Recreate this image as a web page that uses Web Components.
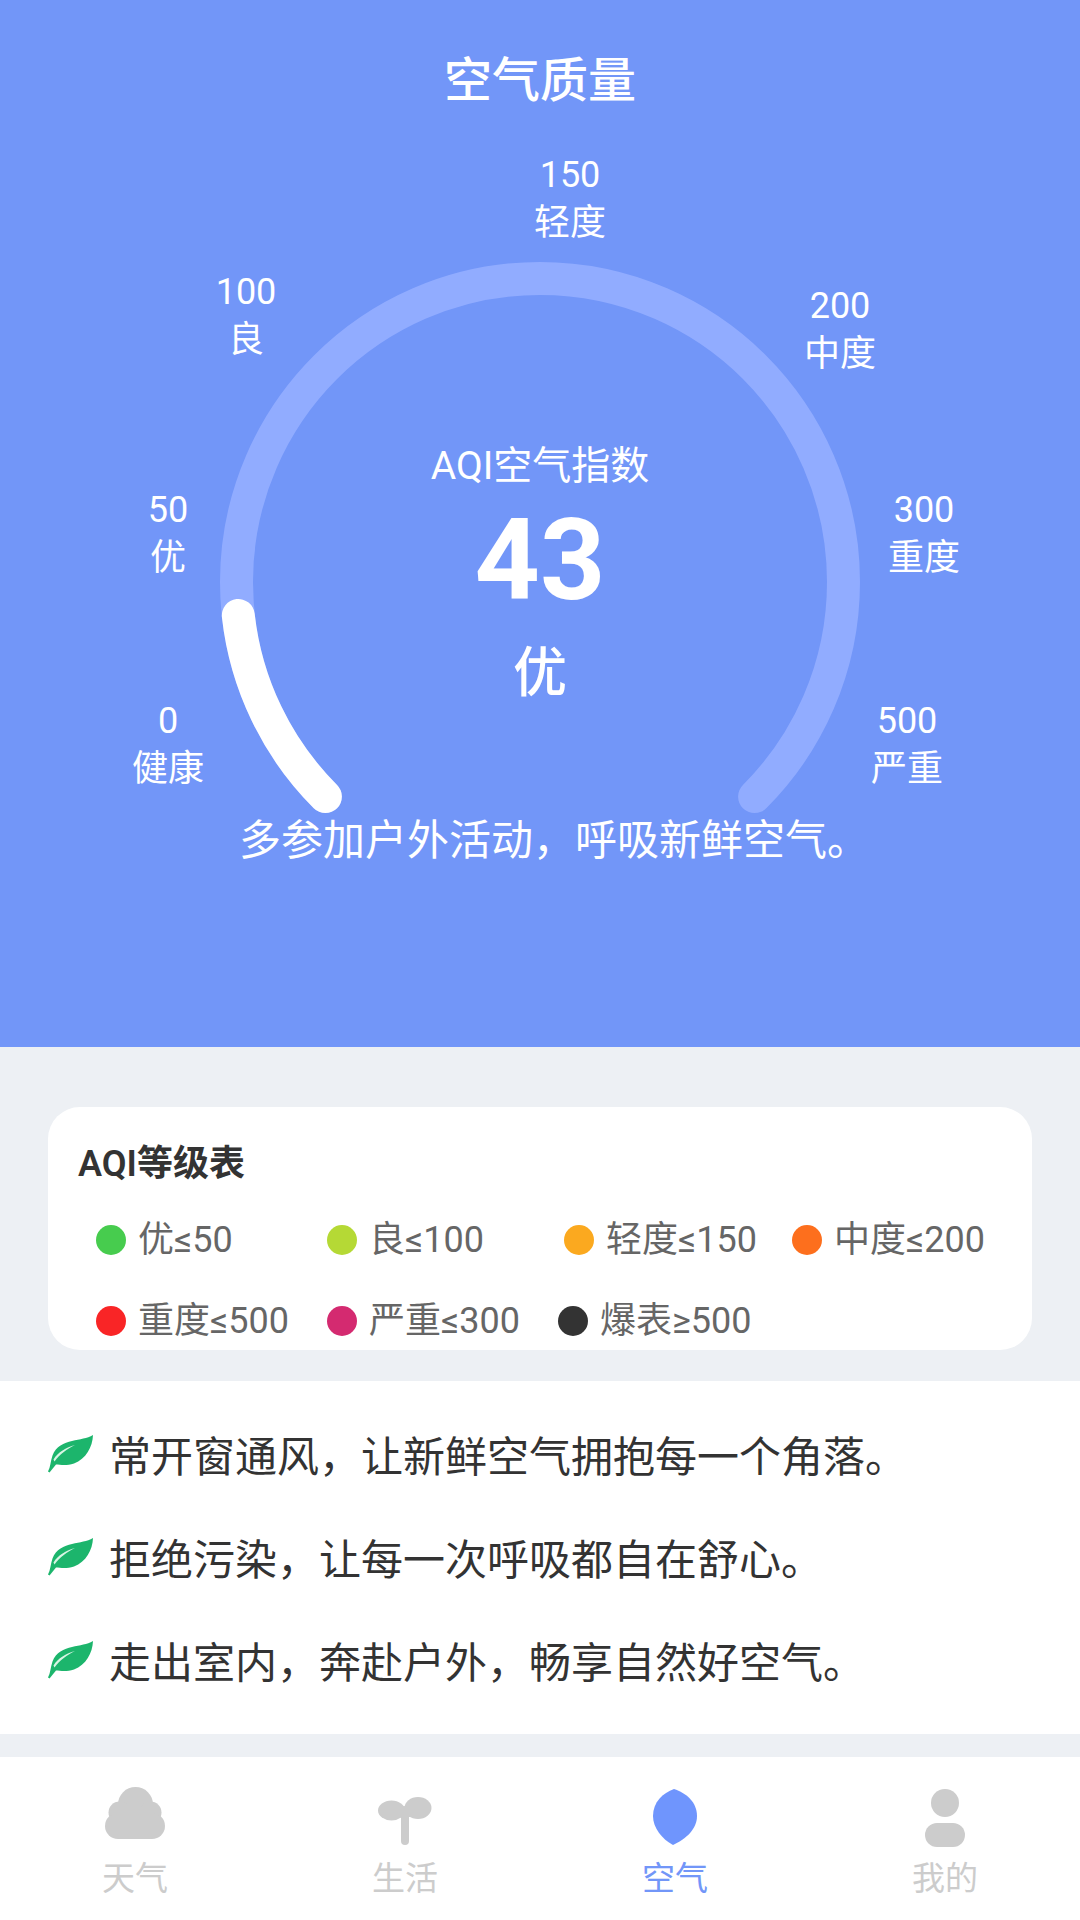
<!DOCTYPE html>
<html lang="zh-CN">
<head>
<meta charset="utf-8">
<title>空气质量</title>
<style>
html,body{margin:0;padding:0;background:#edf0f4;font-family:Roboto,"Noto Sans CJK SC",sans-serif}
</style>
</head>
<body>
<aqi-screen>
  <aqi-hero>
    <aqi-gauge value="43" level="优" caption="AQI空气指数">
      <gauge-label style="--x:570px;--y:49px" num="150" name="轻度"></gauge-label>
      <gauge-label style="--x:246px;--y:166px" num="100" name="良"></gauge-label>
      <gauge-label style="--x:840px;--y:180px" num="200" name="中度"></gauge-label>
      <gauge-label style="--x:168px;--y:384px" num="50" name="优"></gauge-label>
      <gauge-label style="--x:924px;--y:384px" num="300" name="重度"></gauge-label>
      <gauge-label style="--x:168px;--y:595px" num="0" name="健康"></gauge-label>
      <gauge-label style="--x:907px;--y:595px" num="500" name="严重"></gauge-label>
    </aqi-gauge>
  </aqi-hero>
  <level-card>
    <level-row style="--cols:231px 237px 228px 1fr">
      <level-item color="#47cc4e">优≤50</level-item>
      <level-item color="#b5d935">良≤100</level-item>
      <level-item color="#fba91f">轻度≤150</level-item>
      <level-item color="#fd6f1d">中度≤200</level-item>
    </level-row>
    <level-row style="--cols:231px 231px 1fr">
      <level-item color="#f92526">重度≤500</level-item>
      <level-item color="#d42a70">严重≤300</level-item>
      <level-item color="#333333">爆表≥500</level-item>
    </level-row>
  </level-card>
  <tip-list>
    <tip-row>常开窗通风，让新鲜空气拥抱每一个角落。</tip-row>
    <tip-row>拒绝污染，让每一次呼吸都自在舒心。</tip-row>
    <tip-row>走出室内，奔赴户外，畅享自然好空气。</tip-row>
  </tip-list>
  <tab-bar>
    <tab-item label="天气">
      <svg style="margin-bottom:8px" width="60" height="52" viewBox="0 0 60 52" fill="#cccccc"><circle cx="30.500" cy="17.500" r="17.500"/><circle cx="14.500" cy="25.500" r="11"/><circle cx="45.500" cy="25.500" r="11"/><rect x="0" y="26" width="60" height="26" rx="13"/></svg>
    </tab-item>
    <tab-item label="生活">
      <svg style="margin-bottom:2px" width="54" height="48" viewBox="0 0 54 48" fill="#cccccc"><ellipse cx="13.5" cy="13.5" rx="13.5" ry="10"/><ellipse cx="40" cy="11" rx="13.5" ry="11"/><path d="M27 13V44" stroke="#cccccc" stroke-width="8" stroke-linecap="round" fill="none"/><path d="M20 12H34V20H20Z"/></svg>
    </tab-item>
    <tab-item label="空气" active>
      <svg style="margin-bottom:2px" width="44" height="56" viewBox="0 0 44 56" fill="#6f95fd"><path d="M21 0C33 4 44 13 44 27C44 40 33 50 20 56C9 50 0 39 0 27C0 13 10 4 21 0Z"/></svg>
    </tab-item>
    <tab-item label="我的">
      <svg width="40" height="58" viewBox="0 0 40 58" fill="#cccccc"><circle cx="20" cy="14" r="14"/><rect x="0" y="34" width="40" height="24" rx="12"/></svg>
    </tab-item>
  </tab-bar>
</aqi-screen>
<script>
const def=(name,html,init)=>{customElements.define(name,class extends HTMLElement{
  constructor(){super();const r=this.attachShadow({mode:'open'});r.innerHTML=html;}
  connectedCallback(){init&&init(this,this.shadowRoot);}
});};
const FONT='Roboto,"Noto Sans CJK SC",sans-serif';

def('aqi-screen',`<style>:host{display:flex;flex-direction:column;width:1080px;height:1920px;overflow:hidden;background:#edf0f4;font-family:${FONT}}</style><slot></slot>`);

def('aqi-hero',`<style>
:host{display:flex;flex-direction:column;align-items:center;height:1047px;background:#7296f8;color:#fff;flex:none}
h1{margin:0;padding-top:45px;height:105px;line-height:72px;font-size:48px;font-weight:500}
p{margin:0;padding:1px 0 0 28px;line-height:60px;font-size:42px;white-space:nowrap}
</style><h1>空气质量</h1><slot></slot><p>多参加户外活动，呼吸新鲜空气。</p>`);

def('aqi-gauge',`<style>
:host{display:block;position:relative;width:1080px;height:660px;flex:none}
svg{position:absolute;left:0;top:0;overflow:visible}
.c{position:relative;display:flex;flex-direction:column;align-items:center;padding-top:292px}
.cap{font-size:39px;line-height:48px}
.val{font-size:114px;line-height:130px;font-weight:700;margin-top:5px}
.lvl{font-size:54px;line-height:64px;margin-top:17px;font-weight:500}
</style>
<svg width="1080" height="660" viewBox="0 0 1080 660" fill="none" stroke-width="33" stroke-linecap="round">
<path d="M325.4 646.6A303.5 303.5 0 1 1 754.6 646.6" stroke="#91acff"/>
<path d="M325.4 646.6A303.5 303.5 0 0 1 238.3 465.5" stroke="#fff"/>
</svg>
<div class="c"><div class="cap"></div><div class="val"></div><div class="lvl"></div></div>
<slot></slot>`,(el,r)=>{
  r.querySelector('.cap').textContent=el.getAttribute('caption');
  r.querySelector('.val').textContent=el.getAttribute('value');
  r.querySelector('.lvl').textContent=el.getAttribute('level');
});

def('gauge-label',`<style>
:host{position:absolute;left:var(--x);top:var(--y);transform:translate(-50%,-50%);display:flex;flex-direction:column;align-items:center;font-size:36px;line-height:48px;white-space:nowrap}
</style><span class="n"></span><span class="t"></span>`,(el,r)=>{
  r.querySelector('.n').textContent=el.getAttribute('num');
  r.querySelector('.t').textContent=el.getAttribute('name');
});

def('level-card',`<style>
:host{display:flex;flex-direction:column;box-sizing:border-box;width:984px;height:243px;margin:60px 48px 31px;padding:33px 0 0 30px;background:#fff;border-radius:32px;flex:none}
h2{margin:0 0 32px;font-size:36px;line-height:48px;font-weight:600;color:#333}
.rows{display:flex;flex-direction:column;gap:41px;padding-left:18px}
</style><h2>AQI等级表</h2><div class="rows"><slot></slot></div>`);

def('level-row',`<style>:host{display:grid;grid-template-columns:var(--cols);height:40px;align-items:center}</style><slot></slot>`);

def('level-item',`<style>
:host{display:flex;align-items:center;gap:12px;font-size:36px;line-height:40px;color:#666;white-space:nowrap}
i{width:30px;height:30px;border-radius:50%;flex:none}
</style><i></i><slot></slot>`,(el,r)=>{r.querySelector('i').style.background=el.getAttribute('color');});

def('tip-list',`<style>
:host{display:flex;flex-direction:column;box-sizing:border-box;height:353px;padding-top:25px;background:#fff;flex:none}
</style><slot></slot>`);

def('tip-row',`<style>
:host{display:flex;align-items:flex-start;height:103px;padding-left:48px;font-size:42px;line-height:103px;color:#333;white-space:nowrap}
svg{flex:none;margin:29px 15px 0 0}
</style>
<svg width="46" height="38" viewBox="0 0 46 38"><path d="M45 0C44.500 12 38 24 26 28.500C18 31 12 29.500 8 29.500L1.500 37.500L0 36.500C2.500 32 2.500 26 4.500 20.500C8 11 16 8 24 6C32 4 39 3.500 45 0Z" fill="#1cb56c"/><path d="M5.500 24.500C10 17 18 12.500 27 10C19 14 12 19 6.500 26.500Z" fill="#d8f5e4"/></svg>
<span><slot></slot></span>`);

def('tab-bar',`<style>
:host{display:grid;grid-template-columns:repeat(4,1fr);height:163px;margin-top:23px;background:#fff;flex:none}
</style><slot></slot>`);

def('tab-item',`<style>
:host{display:flex;flex-direction:column;align-items:center;position:relative;font-size:33px;line-height:44px;color:#cccccc}
:host([active]){color:#7296f8}
.ic{display:flex;align-items:flex-end;justify-content:center;height:62px;margin-top:28px}
.lb{margin-top:10px}
</style><div class="ic"><slot></slot></div><div class="lb"></div>`,(el,r)=>{r.querySelector('.lb').textContent=el.getAttribute('label');});
</script>
</body>
</html>
